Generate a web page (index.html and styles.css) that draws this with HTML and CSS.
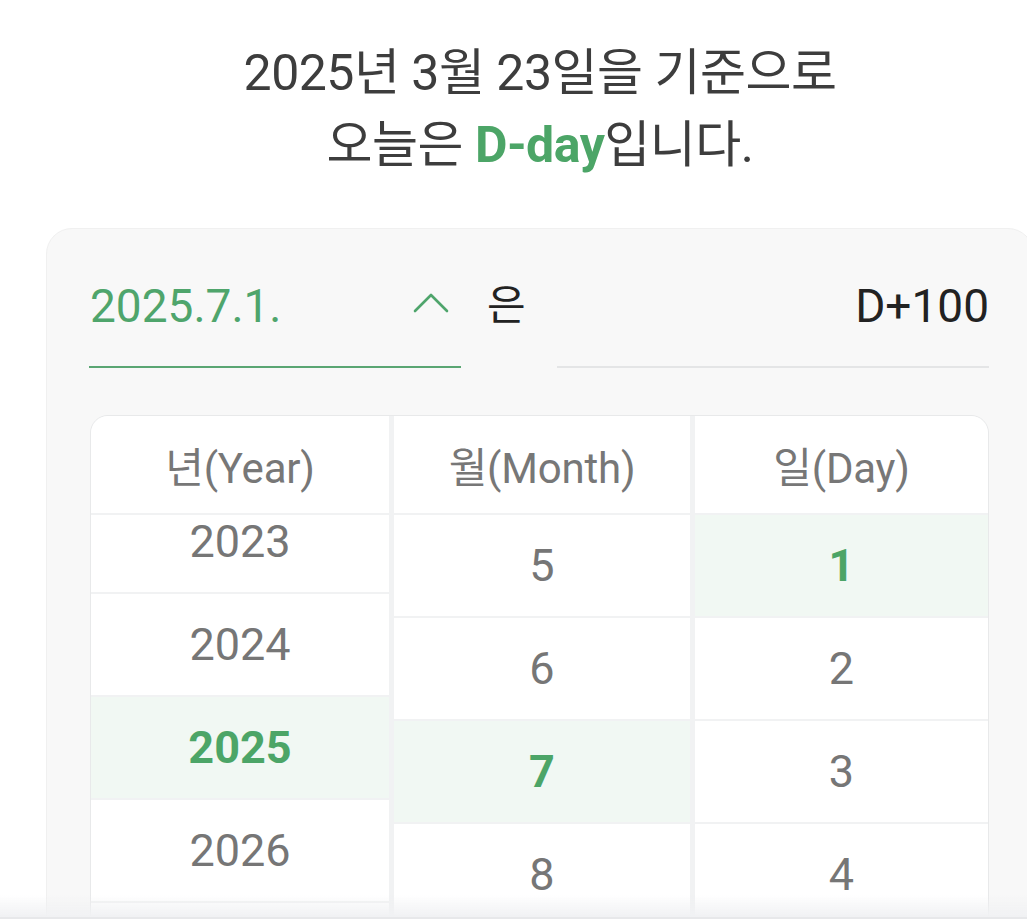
FILE: index.html
```html
<!DOCTYPE html>
<html lang="ko">
<head>
<meta charset="utf-8">
<title>D-day 계산기</title>
<link rel="stylesheet" href="styles.css">
</head>
<body>
<div class="page">
  <h1 class="headline">
    <span class="line">2025년 3월 23일을 기준으로</span>
    <span class="line">오늘은 <strong class="accent">D-day</strong>입니다.</span>
  </h1>

  <section class="card">
    <div class="field-row">
      <div class="field field-date">
        <span class="field-value">2025.7.1.</span>
        <svg class="chevron" width="36" height="20" viewBox="0 0 36 20" aria-hidden="true">
          <polyline points="2,18 18,2 34,18" fill="none" stroke="#4fa56c" stroke-width="2.6" stroke-linecap="round" stroke-linejoin="round"/>
        </svg>
      </div>
      <span class="particle">은</span>
      <div class="field field-result">
        <span class="result-value">D+100</span>
      </div>
    </div>

    <div class="picker">
      <div class="col">
        <div class="col-head">년(Year)</div>
        <div class="col-body">
          <ul class="list list-year">
            <li class="item">2023</li>
            <li class="item">2024</li>
            <li class="item selected">2025</li>
            <li class="item">2026</li>
            <li class="item">2027</li>
          </ul>
        </div>
      </div>
      <div class="col">
        <div class="col-head">월(Month)</div>
        <div class="col-body">
          <ul class="list">
            <li class="item">5</li>
            <li class="item">6</li>
            <li class="item selected">7</li>
            <li class="item">8</li>
            <li class="item">9</li>
          </ul>
        </div>
      </div>
      <div class="col">
        <div class="col-head">일(Day)</div>
        <div class="col-body">
          <ul class="list">
            <li class="item selected">1</li>
            <li class="item">2</li>
            <li class="item">3</li>
            <li class="item">4</li>
            <li class="item">5</li>
          </ul>
        </div>
      </div>
    </div>
  </section>
</div>
<div class="bottom-fade"></div>
</body>
</html>
```

FILE: styles.css
```css
html, body {
  margin: 0;
  padding: 0;
  background: #ffffff;
  overflow: hidden;
  height: 919px;
}

body {
  font-family: Roboto, "Noto Sans CJK KR", sans-serif;
  color: #3b3b3b;
}

.page {
  width: 1080px;
  box-sizing: border-box;
  padding: 37px 46px 0;
}

.headline {
  margin: 0;
  font-weight: 400;
  font-size: 50px;
  line-height: 72px;
  text-align: center;
  color: #3d3d3d;
  display: flex;
  flex-direction: column;
  align-items: center;
  letter-spacing: -0.5px;
}

.accent {
  color: #4ca567;
  font-weight: 700;
}

.card {
  margin-top: 47px;
  background: #f8f8f8;
  border: 1px solid #f0f0f0;
  border-radius: 26px;
  padding: 32px 44px 0 42px;
  height: 760px;
  box-sizing: border-box;
}

.field-row {
  display: flex;
  align-items: flex-end;
}

.field {
  display: flex;
  align-items: center;
  padding: 20px 0 35px;
  line-height: 50px;
  font-size: 46px;
  border-bottom: 2px solid #e4e5e6;
}

.field-date {
  width: 372px;
  box-sizing: border-box;
  border-bottom-color: #5aa673;
  color: #4fa56c;
  justify-content: space-between;
}

.field-value {
  padding-left: 1px;
}

.chevron {
  margin-right: 12px;
  margin-top: -6px;
}

.particle {
  font-size: 42px;
  line-height: 50px;
  color: #222222;
  margin: 0 31px 37px 26px;
}

.field-result {
  flex: 1;
  justify-content: flex-end;
  color: #222222;
}

.picker {
  margin-top: 47px;
  margin-left: 1px;
  border: 1px solid #e8e9ea;
  border-radius: 18px;
  background: #f1f2f3;
  overflow: hidden;
  display: grid;
  grid-template-columns: 298px 296px 1fr;
  column-gap: 5px;
}

.col {
  display: flex;
  flex-direction: column;
  gap: 2px;
}

.col-head {
  height: 97px;
  background: #ffffff;
  display: flex;
  align-items: center;
  justify-content: center;
  font-size: 42px;
  color: #777777;
  letter-spacing: -0.2px;
}

.col-body {
  height: 520px;
  overflow: hidden;
}

.list {
  list-style: none;
  margin: 0;
  padding: 0;
  display: flex;
  flex-direction: column;
  gap: 2px;
}

.list-year {
  margin-top: -24px;
}

.item {
  height: 101px;
  background: #ffffff;
  display: flex;
  align-items: center;
  justify-content: center;
  font-size: 45px;
  color: #767676;
}

.item.selected {
  background: #f1f8f3;
  color: #4ca567;
  font-weight: 700;
}

.bottom-fade {
  position: fixed;
  left: 0;
  right: 0;
  bottom: 0;
  height: 22px;
  background: linear-gradient(to bottom, rgba(244, 245, 247, 0), rgba(240, 241, 243, 1));
  border-bottom: 2px solid #e7e8ea;
}
```
